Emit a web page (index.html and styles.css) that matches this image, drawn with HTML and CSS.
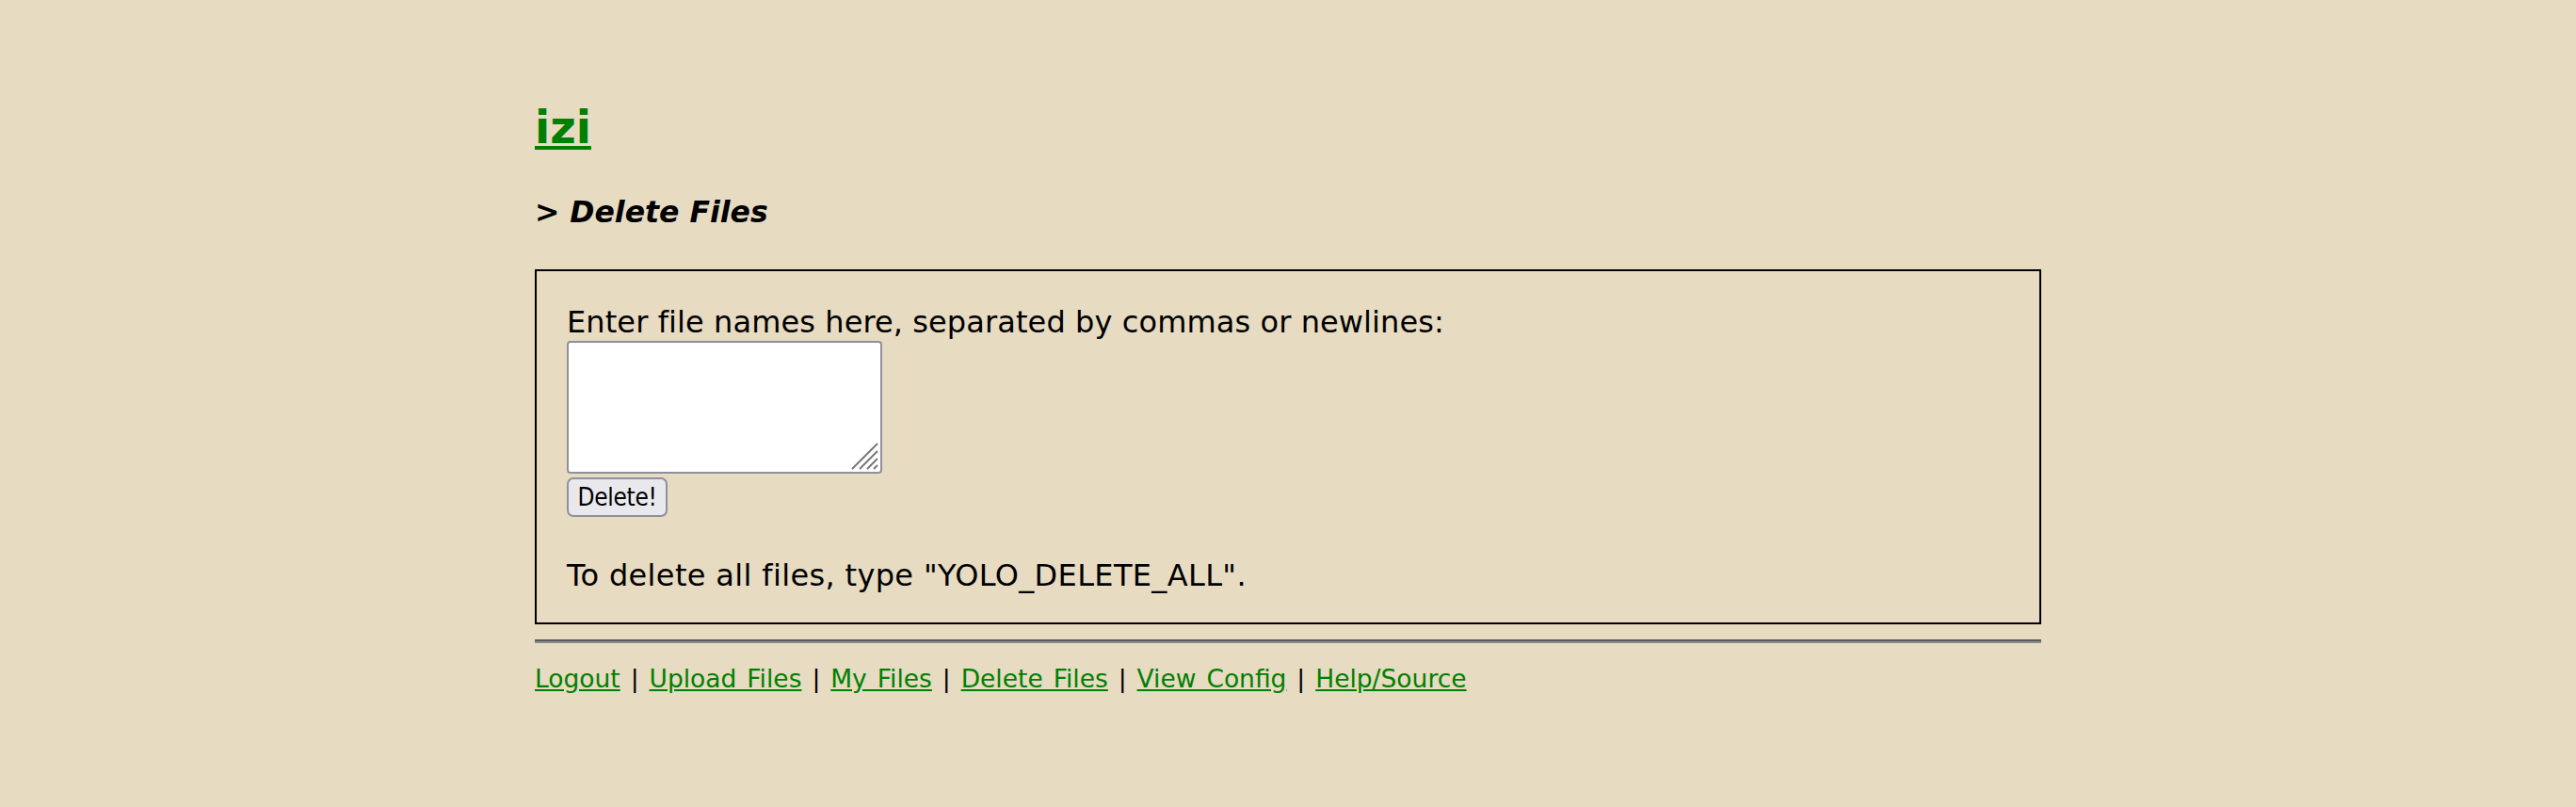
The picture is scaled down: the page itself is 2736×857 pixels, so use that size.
FILE: index.html
```html
<!DOCTYPE html>
<html lang="en">
<head>
<meta charset="utf-8">
<title>izi - Delete Files</title>
<link rel="stylesheet" href="styles.css">
</head>
<body>
<div class="page">
  <h1 class="title"><a class="link" href="#">izi</a></h1>
  <h2 class="crumb">&gt; Delete Files</h2>
  <div class="panel">
    <form class="del-form">
      <label class="prompt" for="names">Enter file names here, separated by commas or newlines:</label>
      <div class="ta-wrap">
        <textarea class="names" id="names"></textarea>
        <svg class="grip" viewBox="0 0 30 30" width="30" height="30" aria-hidden="true">
          <line x1="2" y1="29" x2="29" y2="2" />
          <line x1="10" y1="29" x2="29" y2="10" />
          <line x1="18" y1="29" x2="29" y2="18" />
          <line x1="25" y1="29" x2="29" y2="25" />
        </svg>
      </div>
      <button class="btn" type="button">Delete!</button>
    </form>
    <p class="note">To delete all files, type "YOLO_DELETE_ALL".</p>
  </div>
  <hr class="rule">
  <nav class="foot">
    <a class="link" href="#">Logout</a> | <a class="link" href="#">Upload Files</a> | <a class="link" href="#">My Files</a> | <a class="link" href="#">Delete Files</a> | <a class="link" href="#">View Config</a> | <a class="link" href="#">Help/Source</a>
  </nav>
</div>
</body>
</html>
```

FILE: styles.css
```css
html, body {
  margin: 0;
  padding: 0;
  background: #e7dbc2;
}

body {
  font-family: "DejaVu Sans", Verdana, sans-serif;
  font-size: 32px;
  color: #000;
}

.page {
  width: 1600px;
  margin: 0 auto;
  padding-top: 108px;
}

.link {
  color: #008000;
}

.title {
  margin: 0;
  font-size: 47.25px;
  font-weight: bold;
  line-height: normal;
}

.crumb {
  margin: 44px 0 0;
  font-size: 31.5px;
  font-weight: bold;
  font-style: italic;
  line-height: normal;
}

.panel {
  margin-top: 43px;
  border: 2px solid #000;
  padding: 35px 32px 31px;
  box-sizing: border-box;
}

.del-form {
  margin: 0;
}

.prompt {
  display: block;
  line-height: normal;
  letter-spacing: 0.1px;
}

.ta-wrap {
  position: relative;
  width: 335px;
  height: 141px;
  margin-top: 1px;
}

.names {
  display: block;
  width: 100%;
  height: 100%;
  box-sizing: border-box;
  margin: 0;
  border: 2px solid #8f8f9d;
  border-radius: 4px;
  background: #fff;
  resize: none;
  font-family: "DejaVu Sans Mono", monospace;
  font-size: 23px;
}

.grip {
  position: absolute;
  right: 4px;
  bottom: 4px;
  stroke: #777;
  stroke-width: 2;
}

.btn {
  display: block;
  margin-top: 4px;
  width: 107px;
  height: 42px;
  padding: 0;
  box-sizing: border-box;
  border: 2px solid #8f8f9d;
  border-radius: 7px;
  background: #e9e9ed;
  color: #000;
  font-family: "DejaVu Sans Condensed", "DejaVu Sans", sans-serif;
  font-size: 26px;
  letter-spacing: -0.3px;
}

.note {
  margin: 43px 0 0;
  line-height: normal;
  letter-spacing: 0.35px;
}

.rule {
  margin: 16px 0 0;
  height: 0;
  border: 0;
  border-top: 2px solid #5a5a5a;
  border-bottom: 2px solid #8a8a8a;
}

.foot {
  margin-top: 22px;
  font-size: 26.5px;
  line-height: normal;
  word-spacing: 2.5px;
}
```
